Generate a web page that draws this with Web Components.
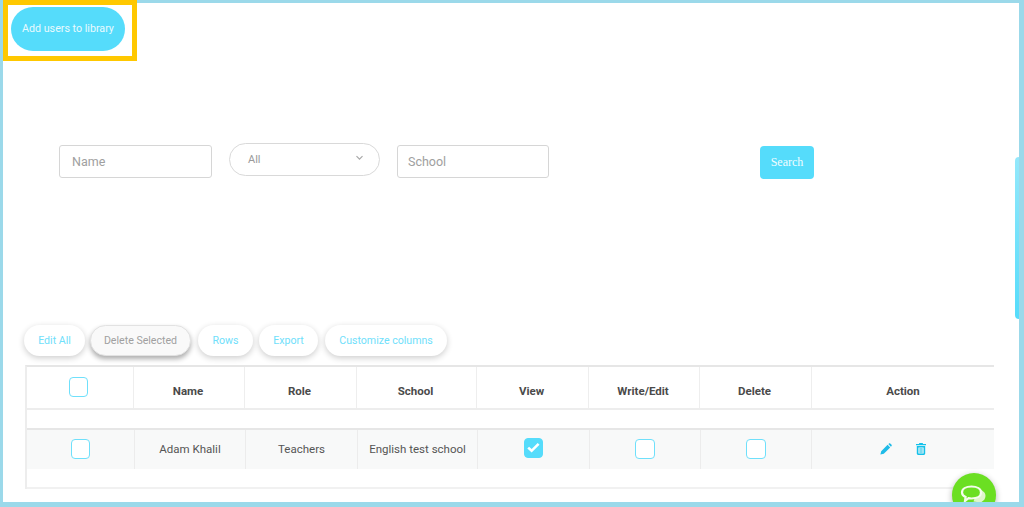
<!DOCTYPE html>
<html>
<head>
<meta charset="utf-8">
<title>Add users to library</title>
<style>
  html, body { margin: 0; padding: 0; background: #fff; overflow: hidden; }
  body { font-family: Roboto, "Liberation Sans", sans-serif; }
</style>
</head>
<body>
<app-frame>
  <highlight-box><pill-button>Add users to library</pill-button></highlight-box>
  <filter-bar>
    <text-field style="width:153px;padding-left:12px">Name</text-field>
    <select-field>All</select-field>
    <text-field style="width:152px;padding-left:10px">School</text-field>
    <search-button>Search</search-button>
  </filter-bar>
  <table-toolbar>
    <tool-button style="width:61px">Edit All</tool-button>
    <tool-button style="width:101px;margin-left:-1px" active>Delete Selected</tool-button>
    <tool-button style="width:55px;margin-left:1px">Rows</tool-button>
    <tool-button style="width:59px">Export</tool-button>
    <tool-button style="width:122px;margin-left:1px">Customize columns</tool-button>
  </table-toolbar>
  <users-table></users-table>
  <scroll-tab></scroll-tab>
  <chat-bubble></chat-bubble>
</app-frame>

<script>
class AppFrame extends HTMLElement {
  connectedCallback() {
    this.attachShadow({ mode: 'open' });
    this.shadowRoot.innerHTML = `
      <style>
        :host {
          display: block;
          position: relative;
          box-sizing: border-box;
          width: 1024px;
          height: 507px;
          border-style: solid;
          border-color: #9bd9ea;
          border-width: 3px 5px 5px 3px;
          background: #fff;
        }
      </style>
      <slot></slot>
    `;
  }
}
customElements.define('app-frame', AppFrame);

class HighlightBox extends HTMLElement {
  connectedCallback() {
    this.attachShadow({ mode: 'open' });
    this.shadowRoot.innerHTML = `
      <style>
        :host {
          display: block;
          box-sizing: border-box;
          width: 134px;
          height: 61px;
          margin-top: -3px;
          padding: 2px 0 0 3px;
          border: 5px solid #ffc800;
        }
      </style>
      <slot></slot>
    `;
  }
}
customElements.define('highlight-box', HighlightBox);

class PillButton extends HTMLElement {
  connectedCallback() {
    this.attachShadow({ mode: 'open' });
    this.shadowRoot.innerHTML = `
      <style>
        :host {
          display: flex;
          align-items: center;
          justify-content: center;
          width: 114px;
          height: 44px;
          border-radius: 22px;
          background: #55dcfb;
          color: #e9fafe;
          font-size: 10.7px;
          padding-bottom: 2px;
          box-sizing: border-box;
        }
      </style>
      <slot></slot>
    `;
  }
}
customElements.define('pill-button', PillButton);

class FilterBar extends HTMLElement {
  connectedCallback() {
    this.attachShadow({ mode: 'open' });
    this.shadowRoot.innerHTML = `
      <style>
        :host {
          display: flex;
          align-items: flex-start;
          gap: 17px;
          height: 33px;
          margin-top: 82px;
          padding-left: 56px;
        }
      </style>
      <slot></slot>
    `;
  }
}
customElements.define('filter-bar', FilterBar);

class TextField extends HTMLElement {
  connectedCallback() {
    this.attachShadow({ mode: 'open' });
    this.shadowRoot.innerHTML = `
      <style>
        :host {
          display: flex;
          align-items: center;
          box-sizing: border-box;
          height: 33px;
          margin-top: 2px;
          padding-left: 11px;
          border: 1px solid #d6d6d6;
          border-radius: 3px;
          color: #a0a0a0;
          font-size: 12.5px;
        }
      </style>
      <slot></slot>
    `;
  }
}
customElements.define('text-field', TextField);

class SelectField extends HTMLElement {
  connectedCallback() {
    this.attachShadow({ mode: 'open' });
    this.shadowRoot.innerHTML = `
      <style>
        :host {
          display: flex;
          align-items: center;
          justify-content: space-between;
          box-sizing: border-box;
          width: 151px;
          height: 33px;
          padding: 0 15px 0 18px;
          border: 1px solid #d9d9d9;
          border-radius: 17px;
          color: #9a9a9a;
          font-size: 11px;
        }
        svg { display: block; margin-bottom: 3px; }
      </style>
      <slot></slot>
      <svg width="9" height="6" viewBox="0 0 9 6" fill="none" stroke="#a8a8a8" stroke-width="1.2">
        <path d="M1.500 1.200l3 3 3-3"/>
      </svg>
    `;
  }
}
customElements.define('select-field', SelectField);

class SearchButton extends HTMLElement {
  connectedCallback() {
    this.attachShadow({ mode: 'open' });
    this.shadowRoot.innerHTML = `
      <style>
        :host {
          display: flex;
          align-items: center;
          justify-content: center;
          width: 54px;
          height: 33px;
          margin: 3px 0 0 194px;
          border-radius: 4px;
          background: #55dcfb;
          color: #f2fcff;
          font-family: "Liberation Serif", serif;
          font-size: 12px;
        }
      </style>
      <slot></slot>
    `;
  }
}
customElements.define('search-button', SearchButton);

class TableToolbar extends HTMLElement {
  connectedCallback() {
    this.attachShadow({ mode: 'open' });
    this.shadowRoot.innerHTML = `
      <style>
        :host {
          display: flex;
          gap: 6px;
          height: 31px;
          margin-top: 149px;
          padding-left: 21px;
        }
      </style>
      <slot></slot>
    `;
  }
}
customElements.define('table-toolbar', TableToolbar);

class ToolButton extends HTMLElement {
  connectedCallback() {
    this.attachShadow({ mode: 'open' });
    this.shadowRoot.innerHTML = `
      <style>
        :host {
          display: flex;
          align-items: center;
          justify-content: center;
          box-sizing: border-box;
          height: 31px;
          border-radius: 16px;
          background: #fff;
          color: #6fe0fb;
          font-size: 10.6px;
          box-shadow: 0 2px 6px rgba(0, 0, 0, .2);
          white-space: nowrap;
        }
        :host([active]) {
          background: #f9f9f9;
          color: #a0a0a0;
          border: 1px solid #e2e2e2;
          box-shadow: 0 3px 5px rgba(0, 0, 0, .32);
        }
      </style>
      <slot></slot>
    `;
  }
}
customElements.define('tool-button', ToolButton);

class CheckMark extends HTMLElement {
  connectedCallback() {
    this.attachShadow({ mode: 'open' });
    const checked = this.hasAttribute('checked');
    this.shadowRoot.innerHTML = `
      <style>
        :host {
          display: block;
          box-sizing: border-box;
          width: 19px;
          height: 20px;
          border: 1px solid #6fe0fb;
          border-radius: 4px;
          background: #fff;
        }
        :host([checked]) { background: #55dcfb; border-color: #55dcfb; }
        svg { display: block; margin: 3px 0 0 2px; }
      </style>
      ${checked ? `<svg width="13" height="11" viewBox="0 0 13 11" fill="none" stroke="#fff" stroke-width="2.6">
        <path d="M1.200 5.600l3.400 3.200 7-7"/>
      </svg>` : ''}
    `;
  }
}
customElements.define('check-mark', CheckMark);

class UsersTable extends HTMLElement {
  connectedCallback() {
    this.attachShadow({ mode: 'open' });
    const heads = ['Name', 'Role', 'School', 'View', 'Write/Edit', 'Delete', 'Action'];
    this.shadowRoot.innerHTML = `
      <style>
        :host {
          display: block;
          width: 969px;
          height: 124px;
          margin: 9px 0 0 22px;
          border-top: 2px solid #e6e6e6;
          border-left: 2px solid #ededed;
          box-sizing: border-box;
          font-size: 11.5px;
        }
        .row { display: grid; }
        .head {
          grid-template-columns: 109px 111px 112px 120px 112px 111px 112px 182px;
          margin-left: -2px;
          height: 43px;
          box-sizing: border-box;
          border-bottom: 2px solid #ededed;
          color: #4a4a4a;
          font-weight: 700;
        }
        .head > div { display: flex; align-items: flex-end; justify-content: center; padding: 0 2px 10px 0; box-sizing: border-box; border-right: 1px solid #eeeeee; }
        .head > div:first-child { align-items: flex-start; padding: 10px 2px 0 0; }
        .head > div:last-child { border-right: 0; padding-right: 0; }
        .gap { height: 18px; }
        .body {
          grid-template-columns: 108px 111px 112px 120px 112px 111px 111px 182px;
          height: 41px;
          background: #f8f9f9;
          border-top: 2px solid #e6e6e6;
          box-sizing: border-box;
          color: #555;
        }
        .body > div { display: flex; align-items: center; justify-content: center; padding-bottom: 1px; border-right: 1px solid #ececec; }
        .body > div:last-child { border-right: 0; gap: 24px; padding-right: 1px; }
        .end { height: 18px; border-bottom: 2px solid #f1f1f1; }
        svg { display: block; }
      </style>
      <div class="row head">
        <div><check-mark></check-mark></div>
        ${heads.map(h => `<div>${h}</div>`).join('')}
      </div>
      <div class="gap"></div>
      <div class="row body">
        <div><check-mark></check-mark></div>
        <div>Adam Khalil</div>
        <div>Teachers</div>
        <div>English test school</div>
        <div><check-mark checked style="margin-bottom:2px"></check-mark></div>
        <div><check-mark style="width:20px;margin-right:1px"></check-mark></div>
        <div><check-mark style="width:20px;margin-right:1px"></check-mark></div>
        <div>
          <svg width="12" height="12" viewBox="0 0 12 12" fill="#1fbbe8"><path d="M0.400 11.600l.8-3.400 6.400-6.400 2.600 2.600-6.400 6.400zM8.300 1.100l.8-.7c.3-.3.8-.3 1.100 0l1.400 1.400c.3.3.3.8 0 1.100l-.7.8z"/></svg>
          <svg width="10" height="12" viewBox="0 0 10 12" fill="#14c1ea"><path d="M3.400 0h3.200l.5 1H10v1.300H0V1h2.900zM.8 3h8.400v7.600c0 .8-.6 1.400-1.300 1.400H2.100c-.7 0-1.300-.6-1.300-1.400zm1.600 1.400v6.100h5.200V4.400z" fill-rule="evenodd"/><path d="M3.300 5h3.400v5.200H3.300z" opacity=".55"/></svg>
        </div>
      </div>
      <div class="end"></div>
    `;
  }
}
customElements.define('users-table', UsersTable);

class ScrollTab extends HTMLElement {
  connectedCallback() {
    this.attachShadow({ mode: 'open' });
    this.shadowRoot.innerHTML = `
      <style>
        :host {
          position: absolute;
          top: 154px;
          right: 0;
          width: 4px;
          height: 162px;
          border-radius: 4px 0 0 4px;
          background: linear-gradient(#94e8fb, #55dcfb);
        }
      </style>
    `;
  }
}
customElements.define('scroll-tab', ScrollTab);

class ChatBubble extends HTMLElement {
  connectedCallback() {
    this.attachShadow({ mode: 'open' });
    // clipped by its own box so the disc stops at the frame's bottom border
    this.shadowRoot.innerHTML = `
      <style>
        :host {
          position: absolute;
          left: 941px;
          top: 462px;
          width: 60px;
          height: 37px;
          overflow: hidden;
        }
        .disc {
          position: absolute;
          left: 8px;
          top: 8px;
          width: 44px;
          height: 44px;
          border-radius: 50%;
          background: #6bdf22;
          box-shadow: 0 2px 6px rgba(0, 0, 0, .3);
        }
        svg { position: absolute; left: 16px; top: 15px; }
      </style>
      <div class="disc"></div>
      <svg width="30" height="26" viewBox="0 0 30 26" fill="none">
        <path d="M18 9c4 1 7.500 3 7.500 7 0 3-2 5-5 6.500l-7-1z" fill="#dff5cc"/>
        <path d="M11.500 6.500c5.500 0 9.500 2.300 9.500 6s-4 6-9.500 6c-1 0-2-.1-3-.3L5 21l.6-4C3.300 16 2 14.500 2 12.500c0-3.700 4-6 9.500-6z" fill="#6bdf22" stroke="#f4fcec" stroke-width="2.200"/>
      </svg>
    `;
  }
}
customElements.define('chat-bubble', ChatBubble);
</script>
</body>
</html>
